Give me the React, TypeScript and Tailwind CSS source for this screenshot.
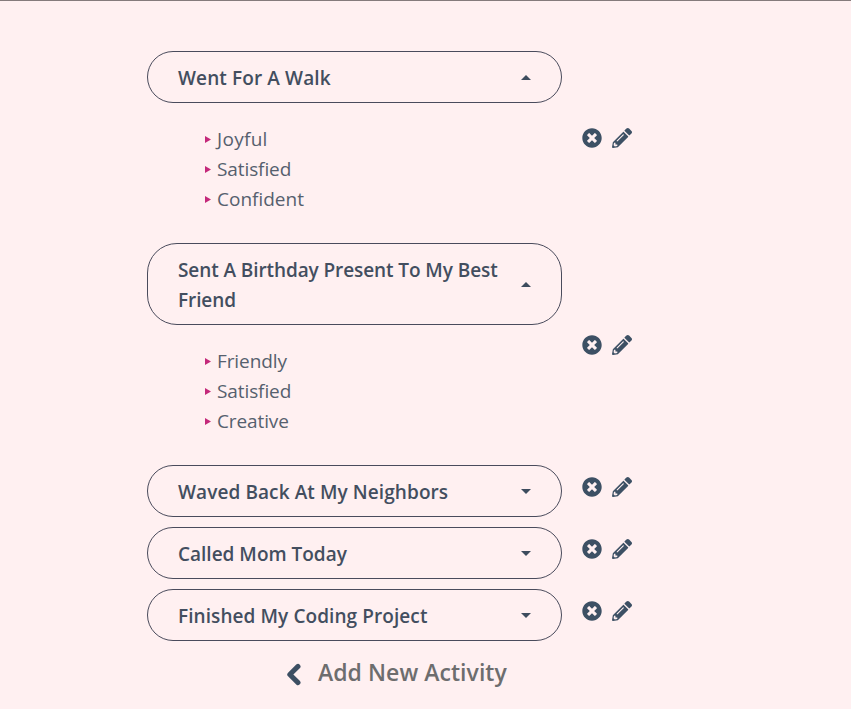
import { FaTimesCircle, FaPencilAlt } from "react-icons/fa";

type Activity = { title: string; tracking: string; feelings?: { name: string; tracking: string }[] };

const activities: Activity[] = [
  {
    title: "Went For A Walk",
    tracking: "tracking-[0.12px]",
    feelings: [
      { name: "Joyful", tracking: "tracking-[0.3px]" },
      { name: "Satisfied", tracking: "tracking-[-0.1px]" },
      { name: "Confident", tracking: "tracking-[0px]" },
    ],
  },
  {
    title: "Sent A Birthday Present To My Best Friend",
    tracking: "tracking-[-0.09px]",
    feelings: [
      { name: "Friendly", tracking: "tracking-[-0.1px]" },
      { name: "Satisfied", tracking: "tracking-[-0.1px]" },
      { name: "Creative", tracking: "tracking-[-0.12px]" },
    ],
  },
  { title: "Waved Back At My Neighbors", tracking: "tracking-[0.09px]" },
  { title: "Called Mom Today", tracking: "tracking-[0px]" },
  { title: "Finished My Coding Project", tracking: "tracking-[0.08px]" },
];

function Caret({ up }: { up: boolean }) {
  return (
    <svg width="10" height="5" viewBox="0 0 10 5" className="mr-[30px] shrink-0 fill-[#3d4c5e]">
      <path d={up ? "M0 5 5 0 10 5Z" : "M0 0H10L5 5Z"} />
    </svg>
  );
}

function ActivityRow({ title, tracking, feelings }: Activity) {
  return (
    <li className="flex items-center">
      <div className="w-[415px]">
        <button className="flex w-full items-center justify-between rounded-[30px] border border-[#4a4b5c] py-[10px] pl-[30px] text-left">
          <span className={`-mb-px w-[330px] pt-px text-[19px] leading-[30px] font-semibold text-[#434e5f] ${tracking}`}>{title}</span>
          <Caret up={!!feelings} />
        </button>
        {feelings && (
          <ul className="pt-[21px] pb-[19px] pl-[58px]">
            {feelings.map((f) => (
              <li key={f.name} className="flex h-[30px] items-center text-[19px] leading-[30px] text-[#56606e]">
                <svg width="6" height="7" viewBox="0 0 6 7" className="mr-[6px] fill-[#c4287a]">
                  <path d="M0 0 6 3.5 0 7Z" />
                </svg>
                <span className={f.tracking}>{f.name}</span>
              </li>
            ))}
          </ul>
        )}
      </div>
      <div className="ml-5 flex gap-[10px] pb-2 text-xl text-[#3d5064]">
        <FaTimesCircle />
        <FaPencilAlt />
      </div>
    </li>
  );
}

export default function App() {
  return (
    <main className="h-[709px] overflow-hidden border-t border-[#857b7c] bg-[#fff0f1] pt-[50px] font-['Open_Sans','Noto_Sans',sans-serif]">
      <ul className="ml-[147px] flex flex-col gap-[10px]">
        {activities.map((a) => (
          <ActivityRow key={a.title} {...a} />
        ))}
      </ul>
      <div className="mt-[14px] ml-[286px] flex h-9 items-center">
        <svg width="16" height="24" viewBox="0 0 16 24" className="mt-[3px] fill-none stroke-[#3d4f63]" strokeWidth="5" strokeLinecap="round" strokeLinejoin="round">
          <path d="M12 3.4 3.8 11.5 12 19.6" />
        </svg>
        <span className="-mt-px ml-4 text-[23px] font-semibold tracking-[0.05px] text-[#6d6d6e]">Add New Activity</span>
      </div>
    </main>
  );
}
